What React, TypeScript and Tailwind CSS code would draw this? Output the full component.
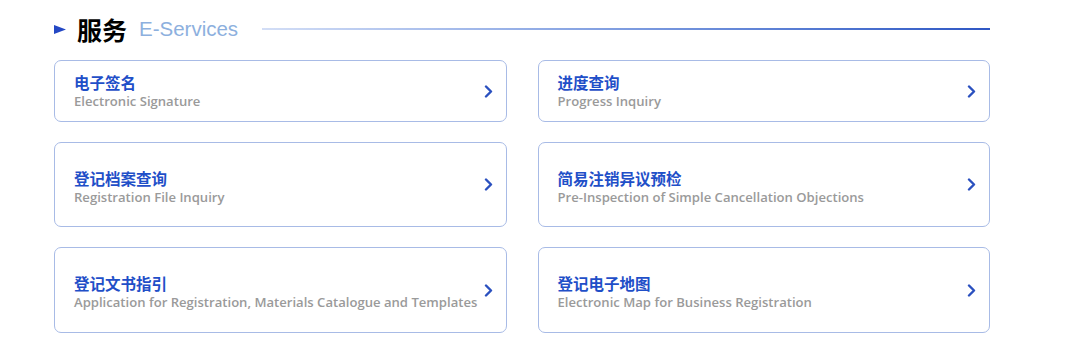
import React from "react";

const items = [
  { zh: "电子签名", en: "Electronic Signature", h: "h-[62px]", t: "-mt-[1px]" },
  { zh: "进度查询", en: "Progress Inquiry", h: "h-[62px]", t: "-mt-[1px]" },
  { zh: "登记档案查询", en: "Registration File Inquiry", h: "h-[85px]", t: "mt-[4px]" },
  { zh: "简易注销异议预检", en: "Pre-Inspection of Simple Cancellation Objections", h: "h-[85px]", t: "mt-[4px]" },
  { zh: "登记文书指引", en: "Application for Registration, Materials Catalogue and Templates", h: "h-[86px]", t: "mt-[4px]" },
  { zh: "登记电子地图", en: "Electronic Map for Business Registration", h: "h-[86px]", t: "mt-[4px]" },
];

function Chevron() {
  return (
    <svg width="9" height="13" viewBox="0 0 9 13" fill="none">
      <path d="M2 1.5 L7 6.5 L2 11.5" stroke="#2a50bf" strokeWidth="2.4" strokeLinecap="round" strokeLinejoin="round" />
    </svg>
  );
}

export default function App() {
  return (
    <div className="w-[1080px] h-[349px] bg-white pl-[54px] pt-[14px] font-['Open_Sans','Noto_Sans_CJK_SC',sans-serif]">
      <div className="w-[936px] flex items-center h-[30px]">
        <svg width="12" height="9" viewBox="0 0 12 9" className="mr-[11px]">
          <polygon points="0,0 12,4.5 0,9" fill="#2448c4" />
        </svg>
        <span className="text-[25px] font-bold text-black leading-none font-['Noto_Sans_CJK_SC',sans-serif]">服务</span>
        <span className="ml-[12px] text-[20.5px] text-[#8db0de] leading-none font-['Liberation_Sans',sans-serif]">E-Services</span>
        <div className="ml-[24px] flex-1 h-[2px] bg-gradient-to-r from-[#d3def6] to-[#2f57c4]" />
      </div>
      <div className="mt-[16px] w-[936px] grid grid-cols-2 gap-x-[31px] gap-y-[20px]">
        {items.map((it) => (
          <div
            key={it.zh}
            className={`${it.h} rounded-[7px] border border-[#a8bbe6] bg-white flex items-center justify-between pl-[19px] pr-[13px]`}
          >
            <div className={`flex flex-col ${it.t}`}>
              <span className="text-[15.5px] font-bold text-[#1f4fc8] leading-[20px] font-['Noto_Sans_CJK_SC',sans-serif]">{it.zh}</span>
              <span className="text-[13.1px] font-semibold text-[#9a9a9a] leading-[18px]">{it.en}</span>
            </div>
            <Chevron />
          </div>
        ))}
      </div>
    </div>
  );
}
